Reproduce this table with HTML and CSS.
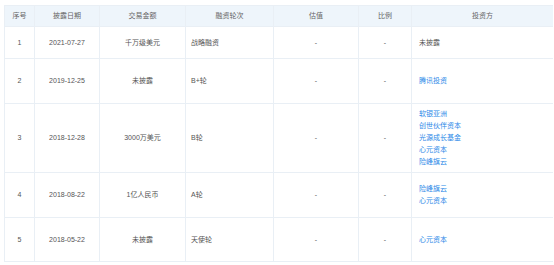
FILE: index.html
```html
<!DOCTYPE html>
<html lang="zh">
<head>
<meta charset="utf-8">
<link rel="stylesheet" href="styles.css">
</head>
<body>
<table class="deals">
  <colgroup>
    <col class="c-no"><col class="c-date"><col class="c-amt"><col class="c-round"><col class="c-val"><col class="c-ratio"><col class="c-inv">
  </colgroup>
  <thead>
    <tr class="head">
      <th>序号</th><th>披露日期</th><th>交易金额</th><th>融资轮次</th><th>估值</th><th>比例</th><th>投资方</th>
    </tr>
  </thead>
  <tbody>
    <tr class="r1">
      <td class="ctr">1</td><td class="ctr">2021-07-27</td><td class="ctr">千万级美元</td><td class="lft">战略融资</td><td class="ctr">-</td><td class="ctr">-</td><td class="inv">未披露</td>
    </tr>
    <tr class="r2">
      <td class="ctr">2</td><td class="ctr">2019-12-25</td><td class="ctr">未披露</td><td class="lft">B+轮</td><td class="ctr">-</td><td class="ctr">-</td><td class="inv"><a class="link">腾讯投资</a></td>
    </tr>
    <tr class="r3">
      <td class="ctr">3</td><td class="ctr">2018-12-28</td><td class="ctr">3000万美元</td><td class="lft">B轮</td><td class="ctr">-</td><td class="ctr">-</td><td class="inv"><a class="link">软银亚洲</a><a class="link">创世伙伴资本</a><a class="link">光源成长基金</a><a class="link">心元资本</a><a class="link">险峰旗云</a></td>
    </tr>
    <tr class="r4">
      <td class="ctr">4</td><td class="ctr">2018-08-22</td><td class="ctr">1亿人民币</td><td class="lft">A轮</td><td class="ctr">-</td><td class="ctr">-</td><td class="inv"><a class="link">险峰旗云</a><a class="link">心元资本</a></td>
    </tr>
    <tr class="r5">
      <td class="ctr">5</td><td class="ctr">2018-05-22</td><td class="ctr">未披露</td><td class="lft">天使轮</td><td class="ctr">-</td><td class="ctr">-</td><td class="inv"><a class="link">心元资本</a></td>
    </tr>
  </tbody>
</table>
</body>
</html>
```
FILE: styles.css
```css
html, body {
  background: #ffffff;
}
body {
  margin: 5px 1px 0 4px;
  font-family: "Liberation Sans", Arial, "Noto Sans CJK SC", sans-serif;
  font-size: 7px;
  color: #555555;
}
.deals {
  width: 549px;
  table-layout: fixed;
  border-collapse: collapse;
  border: 1px solid #e6edf4;
}
.c-no { width: 30px; }
.c-date { width: 65px; }
.c-amt { width: 86px; }
.c-round { width: 88px; }
.c-val { width: 85px; }
.c-ratio { width: 53px; }
.c-inv { width: 142px; }
th, td {
  border: 1px solid #e9eff5;
  padding: 0;
  line-height: 12px;
  vertical-align: middle;
  font-weight: normal;
}
.head {
  height: 21px;
  background: #eef5fb;
}
th {
  color: #666666;
  text-align: center;
}
.r1 { height: 32px; }
.r2 { height: 45px; }
.r3 { height: 69px; }
.r4 { height: 45px; }
.r5 { height: 44px; }
.ctr { text-align: center; }
.lft { text-align: left; padding-left: 5px; }
.inv { text-align: left; padding-left: 7px; }
.link {
  display: block;
  color: #2d8ae8;
  text-decoration: none;
}
```
